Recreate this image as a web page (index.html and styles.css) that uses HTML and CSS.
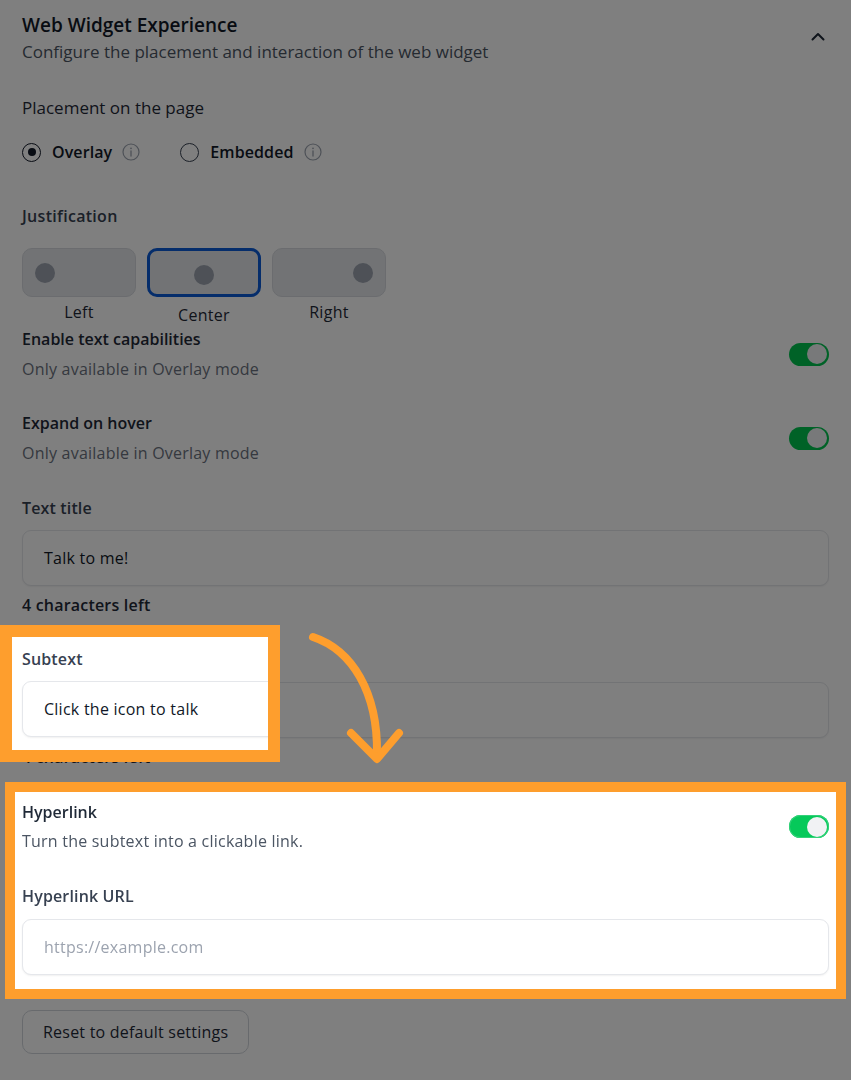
FILE: index.html
```html
<!DOCTYPE html>
<html lang="en">
<head>
<meta charset="utf-8">
<title>Web Widget Experience</title>
<link rel="stylesheet" href="styles.css">
</head>
<body>
<main class="panel">
  <header class="head">
    <div>
      <h1 class="title">Web Widget Experience</h1>
      <p class="subtitle">Configure the placement and interaction of the web widget</p>
    </div>
    <svg class="chev" width="14" height="9" viewBox="0 0 14 9"><polyline points="1.5,7.5 7,2 12.5,7.5" fill="none" stroke="#1f2937" stroke-width="2" stroke-linecap="round" stroke-linejoin="round"/></svg>
  </header>

  <section class="placement">
    <div class="label-md">Placement on the page</div>
    <div class="radios">
      <label class="radio"><span class="ring on"></span><span class="rtext">Overlay</span>
        <svg class="info" width="18" height="18" viewBox="0 0 18 18"><circle cx="9" cy="9" r="8" fill="none" stroke="#9ca3af" stroke-width="1.2"/><line x1="9" y1="8" x2="9" y2="13" stroke="#9ca3af" stroke-width="1.3" stroke-linecap="round"/><circle cx="9" cy="5.3" r="0.9" fill="#9ca3af"/></svg>
      </label>
      <label class="radio"><span class="ring"></span><span class="rtext">Embedded</span>
        <svg class="info" width="18" height="18" viewBox="0 0 18 18"><circle cx="9" cy="9" r="8" fill="none" stroke="#9ca3af" stroke-width="1.2"/><line x1="9" y1="8" x2="9" y2="13" stroke="#9ca3af" stroke-width="1.3" stroke-linecap="round"/><circle cx="9" cy="5.3" r="0.9" fill="#9ca3af"/></svg>
      </label>
    </div>
  </section>

  <section class="just">
    <div class="label-md strong">Justification</div>
    <div class="just-opts">
      <div class="opt"><div class="opt-box left"><span class="dot"></span></div><div class="opt-label">Left</div></div>
      <div class="opt sel"><div class="opt-box center"><span class="dot"></span></div><div class="opt-label">Center</div></div>
      <div class="opt"><div class="opt-box right"><span class="dot"></span></div><div class="opt-label">Right</div></div>
    </div>
  </section>

  <section class="toggle-row first">
    <div>
      <div class="row-title">Enable text capabilities</div>
      <div class="row-sub">Only available in Overlay mode</div>
    </div>
    <span class="switch"></span>
  </section>

  <section class="toggle-row">
    <div>
      <div class="row-title">Expand on hover</div>
      <div class="row-sub">Only available in Overlay mode</div>
    </div>
    <span class="switch"></span>
  </section>

  <section class="field">
    <div class="field-label">Text title</div>
    <div class="input">Talk to me!</div>
    <div class="help">4 characters left</div>
  </section>

  <section class="field">
    <div class="field-label">Subtext</div>
    <div class="input">Click the icon to talk</div>
    <div class="help">4 characters left</div>
  </section>

  <section class="lifted">
    <div class="toggle-row tight">
      <div>
        <div class="row-title">Hyperlink</div>
        <div class="row-sub dark">Turn the subtext into a clickable link.</div>
      </div>
      <span class="switch bright"></span>
    </div>
    <div class="field url">
      <div class="field-label">Hyperlink URL</div>
      <div class="input placeholder">https://example.com</div>
    </div>
  </section>

  <div class="actions">
    <button class="reset" type="button">Reset to default settings</button>
  </div>
</main>

<div class="dim"></div>

<div class="spot" aria-hidden="true">
  <div class="spot-inner">
    <div class="field-label">Subtext</div>
    <div class="input">Click the icon to talk</div>
    <div class="help">4 characters left</div>
  </div>
</div>

<svg class="arrow" width="851" height="1080" viewBox="0 0 851 1080" aria-hidden="true">
  <path d="M313 637 C 352 650, 378 692, 377 754" fill="none" stroke="#fe9e2d" stroke-width="8" stroke-linecap="round"/>
  <path d="M351 733 L377 759 L399 733" fill="none" stroke="#fe9e2d" stroke-width="8" stroke-linecap="round" stroke-linejoin="round"/>
</svg>
</body>
</html>
```

FILE: styles.css
```css
* { box-sizing: border-box; }
html, body { margin: 0; padding: 0; }
body {
  background: #ffffff;
  font-family: "Open Sans", "Noto Sans", "Liberation Sans", sans-serif;
  color: #111827;
  width: 851px;
  height: 1080px;
  overflow: hidden;
  position: relative;
}
.panel {
  padding: 0 22px 0 22px;
}
.head {
  display: flex;
  justify-content: space-between;
  align-items: flex-start;
}
.title {
  margin: 12px 0 0;
  font-size: 19px;
  line-height: 26px;
  font-weight: 600;
  color: #111827;
}
.subtitle {
  margin: 2px 0 0;
  font-size: 17px;
  line-height: 24px;
  color: #4b5563;
}
.chev { margin-top: 32px; margin-right: 4px; display: block; }

.placement { margin-top: 32px; }
.label-md {
  font-size: 17px;
  line-height: 24px;
  font-weight: 500;
  color: #1f2937;
}
.label-md.strong { font-size: 16px; font-weight: 600; color: #374151; letter-spacing: 0.3px; }
.radios {
  margin-top: 20px;
  display: flex;
  gap: 40px;
  height: 24px;
  align-items: center;
}
.radio { display: flex; align-items: center; }
.ring {
  width: 19px; height: 19px;
  border: 1.5px solid #374151;
  border-radius: 50%;
  display: flex; align-items: center; justify-content: center;
  margin-right: 11px;
}
.ring.on { border-color: #111827; }
.ring.on::after {
  content: "";
  width: 8px; height: 8px;
  border-radius: 50%;
  background: #111827;
}
.rtext {
  font-size: 16px;
  font-weight: 600;
  color: #111827;
  margin-right: 10px;
  letter-spacing: 0.1px;
}
.info { display: block; }

.just { margin-top: 40px; }
.just-opts {
  margin-top: 20px;
  display: flex;
  gap: 11px;
}
.opt { width: 114px; display: flex; flex-direction: column; align-items: center; }
.opt-box {
  width: 114px; height: 49px;
  background: #e5e7eb;
  border: 1px solid #d6d9de;
  border-radius: 10px;
  display: flex; align-items: center;
  padding: 0 12px;
}
.opt-box.center { justify-content: center; border: 3px solid #0a5ad6; padding-top: 4px; }
.opt-box.right { justify-content: flex-end; }
.dot { width: 20px; height: 20px; border-radius: 50%; background: #9ca3af; }
.opt-label {
  margin-top: 3px;
  font-size: 16px;
  line-height: 24px;
  font-weight: 500;
  color: #1f2937;
  letter-spacing: 0.3px;
}
.opt.sel .opt-label { margin-top: 6px; }

.toggle-row {
  display: flex;
  justify-content: space-between;
  align-items: center;
  margin-top: 30px;
}
.toggle-row.first { margin-top: 0; }
.row-title {
  font-size: 16px;
  line-height: 24px;
  font-weight: 600;
  color: #1f2937;
}
.row-sub {
  margin-top: 6px;
  font-size: 16px;
  line-height: 24px;
  color: #6b7280;
  letter-spacing: 0.22px;
}
.row-sub.dark { color: #4b5563; margin-top: 5px; }
.switch {
  width: 40px; height: 23px;
  border-radius: 12px;
  background: #00c44f;
  position: relative;
  flex: none;
}
.switch::after {
  content: "";
  position: absolute;
  right: 2px; top: 1.5px;
  width: 20px; height: 20px;
  border-radius: 50%;
  background: #f1f2f4;
}
.switch.bright { background: #06c95a; box-shadow: inset 0 0 0 1px #34d17a; }

.field { margin-top: 31px; }
.field-label {
  font-size: 16px;
  line-height: 24px;
  font-weight: 600;
  color: #374151;
  letter-spacing: 0.15px;
}
.input {
  margin-top: 10px;
  height: 56px;
  border: 1px solid #e5e7eb;
  border-radius: 9px;
  box-shadow: 0 1px 2px rgba(0, 0, 0, 0.06);
  background: #ffffff;
  padding: 0 20px 0 21px;
  display: flex;
  align-items: center;
  font-size: 16px;
  color: #111827;
  letter-spacing: 0.25px;
}
.input.placeholder { color: #9ca3af; }
.help {
  margin-top: 7px;
  font-size: 16px;
  line-height: 24px;
  font-weight: 600;
  color: #1f2937;
  letter-spacing: 0.2px;
}

.lifted {
  position: relative;
  z-index: 3;
  background: #ffffff;
  box-shadow: 0 0 0 10px #fe9e2d;
  margin: 23px -7px 0 -7px;
  padding: 8px 7px 14px 7px;
}
.toggle-row.tight { margin-top: 0; }
.field.url { margin-top: 31px; }
.field.url .input { margin-top: 11px; }

.actions { margin-top: 21px; }
.reset {
  height: 44px;
  padding: 0 20px;
  border: 1px solid #d1d5db;
  border-radius: 10px;
  background: #ffffff;
  font-family: inherit;
  font-size: 16px;
  color: #1f2937;
  letter-spacing: 0.22px;
}

.dim {
  position: fixed;
  inset: 0;
  background: rgba(0, 0, 0, 0.5);
  z-index: 2;
}

.spot {
  position: absolute;
  left: 0; top: 625px;
  width: 280px; height: 137px;
  border: 12px solid #fe9e2d;
  background: #ffffff;
  overflow: hidden;
  z-index: 4;
}
.spot-inner {
  width: 807px;
  padding: 10px 0 0 10px;
}
.spot-inner .input { width: 807px; }

.arrow {
  position: absolute;
  left: 0; top: 0;
  z-index: 5;
  pointer-events: none;
}
```
